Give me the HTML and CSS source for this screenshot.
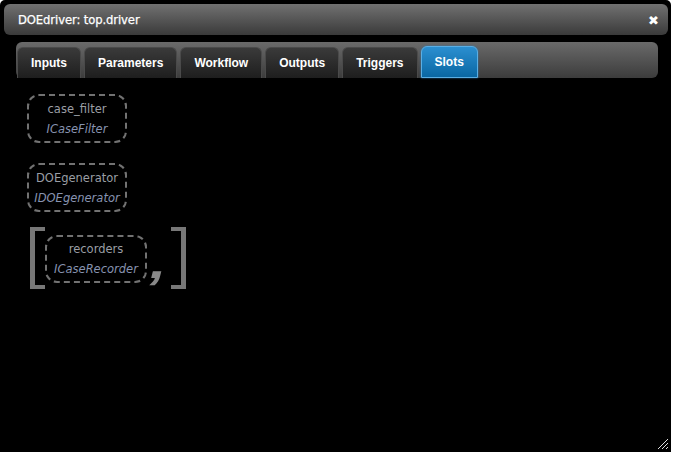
FILE: index.html
```html
<!DOCTYPE html>
<html>
<head>
<meta charset="utf-8">
<link rel="stylesheet" href="styles.css">
</head>
<body>
<div class="dialog">
  <div class="titlebar">
    <span class="title">DOEdriver: top.driver</span>
    <span class="close">✖</span>
  </div>
  <div class="tabs">
    <div class="tab">Inputs</div>
    <div class="tab">Parameters</div>
    <div class="tab">Workflow</div>
    <div class="tab">Outputs</div>
    <div class="tab">Triggers</div>
    <div class="tab active">Slots</div>
  </div>
  <div class="content">
    <div class="slot">
      <div class="name">case_filter</div>
      <div class="iface">ICaseFilter</div>
    </div>
    <div class="slot">
      <div class="name">DOEgenerator</div>
      <div class="iface">IDOEgenerator</div>
    </div>
    <div class="listrow">
      <span class="bracket left"></span>
      <div class="slot">
        <div class="name">recorders</div>
        <div class="iface">ICaseRecorder</div>
      </div>
      <span class="comma">,</span>
      <span class="bracket right"></span>
    </div>
  </div>
  <svg class="grip" width="12" height="12" viewBox="0 0 12 12">
    <path d="M1 11 L11 1 M5 11 L11 5 M9 11 L11 9" stroke="#ddd" stroke-width="1" fill="none"/>
  </svg>
</div>
</body>
</html>
```

FILE: styles.css
```css
html, body {
  margin: 0;
  padding: 0;
}
body {
  width: 675px;
  height: 452px;
  background: #fff;
  font-family: "Liberation Sans", Arial, sans-serif;
  overflow: hidden;
}
.dialog {
  position: relative;
  width: 671px;
  height: 452px;
  box-sizing: border-box;
  background: #000;
  border-radius: 5px 5px 0 0;
  padding: 4px 3px 0 4px;
}
.titlebar {
  height: 31px;
  border-radius: 6px;
  background: linear-gradient(#717171, #3a3a3a);
  display: flex;
  align-items: center;
  justify-content: space-between;
  padding: 1px 9px 0 14px;
  box-sizing: border-box;
  color: #fff;
}
.title {
  font-family: "DejaVu Sans", sans-serif;
  font-size: 11.6px;
  letter-spacing: -0.1px;
  -webkit-text-stroke: 0.25px #fff;
}
.close {
  font-size: 13px;
  font-family: "DejaVu Sans", sans-serif;
  font-weight: bold;
}
.tabs {
  margin: 7px 10px 0 12px;
  height: 36px;
  box-sizing: border-box;
  border-radius: 6px;
  background: linear-gradient(#6a6a6a, #3c3c3c);
  display: flex;
  align-items: flex-end;
  gap: 3px;
  padding: 0 0 0 1px;
}
.tab {
  height: 31px;
  box-sizing: border-box;
  padding: 0 13px;
  border: 1px solid #4a4a4a;
  border-bottom: none;
  border-radius: 6px 6px 0 0;
  background: linear-gradient(#3a3a3a, #1e1e1e);
  color: #fff;
  font-size: 12px;
  font-weight: bold;
  display: flex;
  align-items: center;
}
.tab.active {
  height: 32px;
  background: linear-gradient(#2b8fd0, #0a67a3);
  border: 1px solid #5aaee4;
  border-radius: 6px 6px 0 0;
  box-shadow: 0 0 2px #2a7ab8;
  padding: 0 13px;
}
.content {
  padding: 16px 0 0 23px;
  display: flex;
  flex-direction: column;
  align-items: flex-start;
}
.slot {
  width: 100px;
  height: 49px;
  box-sizing: border-box;
  border: 2px dashed #727272;
  border-radius: 12px;
  display: flex;
  flex-direction: column;
  align-items: center;
  justify-content: center;
  gap: 4px;
  font-family: "DejaVu Sans", sans-serif;
  font-size: 11.5px;
  line-height: 16px;
  margin-bottom: 20px;
}
.name {
  color: #9a9ea4;
}
.iface {
  color: #8793b0;
  font-style: italic;
}
.listrow {
  display: flex;
  align-items: flex-start;
  margin-left: 3px;
  margin-top: -5px;
}
.listrow .slot {
  margin: 8px 0 0 0;
  width: 102px;
  height: 48px;
}
.bracket {
  width: 10px;
  height: 54px;
  border: 4px solid #777;
}
.bracket.left {
  border-right: none;
  border-left-width: 5px;
}
.bracket.right {
  border-left: none;
  border-right-width: 5px;
  margin-left: 5px;
}
.comma {
  color: #888;
  font-family: "Liberation Sans", sans-serif;
  font-weight: bold;
  font-size: 46px;
  line-height: 46px;
  margin: 12px 0 0 6px;
  transform: skewX(-14deg) scaleX(1.3);
}
.grip {
  position: absolute;
  right: 2px;
  bottom: 2px;
}
```
